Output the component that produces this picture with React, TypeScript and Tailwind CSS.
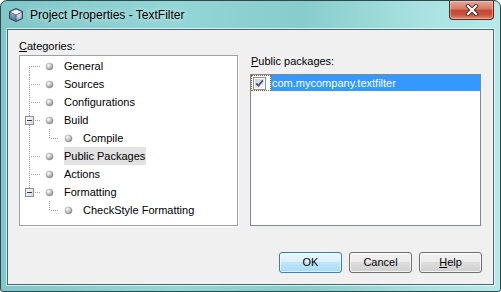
import React from 'react'

type Row = {
  label: string
  level: 1 | 2
  trunkTop?: boolean
  trunkBottom?: boolean
  trunkThrough?: boolean
  expander?: boolean
  selected?: boolean
}

const rows: Row[] = [
  { label: 'General', level: 1, trunkBottom: true },
  { label: 'Sources', level: 1, trunkTop: true, trunkBottom: true },
  { label: 'Configurations', level: 1, trunkTop: true, trunkBottom: true },
  { label: 'Build', level: 1, trunkTop: true, trunkBottom: true, expander: true },
  { label: 'Compile', level: 2, trunkThrough: true },
  { label: 'Public Packages', level: 1, trunkTop: true, trunkBottom: true, selected: true },
  { label: 'Actions', level: 1, trunkTop: true, trunkBottom: true },
  { label: 'Formatting', level: 1, trunkTop: true, expander: true },
  { label: 'CheckStyle Formatting', level: 2 },
]

const dot = { stroke: '#a0a0a0', strokeWidth: 1, strokeDasharray: '1 1' }

function Bullet({ cx }: { cx: number }) {
  return (
    <>
      <defs>
        <radialGradient id="bullet" cx="38%" cy="35%" r="70%">
          <stop offset="0%" stopColor="#ffffff" />
          <stop offset="45%" stopColor="#c9c9c9" />
          <stop offset="100%" stopColor="#7c7c7c" />
        </radialGradient>
      </defs>
      <circle cx={cx} cy={9.5} r={3.6} fill="url(#bullet)" stroke="#9a9a9a" strokeWidth={0.4} />
    </>
  )
}

function Connector({ row }: { row: Row }) {
  if (row.level === 2) {
    return (
      <svg width={63} height={18} className="shrink-0">
        {row.trunkThrough && <line x1={9.5} y1={0} x2={9.5} y2={18} {...dot} />}
        <line x1={29.5} y1={0} x2={29.5} y2={10} {...dot} />
        <line x1={31} y1={9.5} x2={39} y2={9.5} {...dot} />
        <Bullet cx={48.5} />
      </svg>
    )
  }
  const y1 = row.trunkTop ? 0 : 9
  const y2 = row.trunkBottom ? 18 : 10
  return (
    <svg width={44} height={18} className="shrink-0">
      <defs>
        <linearGradient id="expander" x1="0" y1="0" x2="1" y2="1">
          <stop offset="0%" stopColor="#ffffff" />
          <stop offset="100%" stopColor="#d6d6d6" />
        </linearGradient>
      </defs>
      <line x1={9.5} y1={y1} x2={9.5} y2={y2} {...dot} />
      <line x1={row.expander ? 15 : 11} y1={9.5} x2={21} y2={9.5} {...dot} />
      {row.expander && (
        <>
          <rect x={5.5} y={5.5} width={8} height={8} fill="url(#expander)" stroke="#8f8f8f" />
          <line x1={7} y1={9.5} x2={12} y2={9.5} stroke="#22366e" strokeWidth={1} />
        </>
      )}
      <Bullet cx={29.5} />
    </svg>
  )
}

function CubeIcon() {
  return (
    <svg width={16} height={16} viewBox="0 0 16 16">
      <defs>
        <linearGradient id="cubeL" x1="0" y1="0" x2="0" y2="1">
          <stop offset="0%" stopColor="#9fb2c8" />
          <stop offset="100%" stopColor="#5f7491" />
        </linearGradient>
        <linearGradient id="cubeR" x1="0" y1="0" x2="0" y2="1">
          <stop offset="0%" stopColor="#dfe8f2" />
          <stop offset="100%" stopColor="#9db1c9" />
        </linearGradient>
      </defs>
      <path d="M8 1.5 L14.5 4.5 L14.5 11.5 L8 14.5 L1.5 11.5 L1.5 4.5 Z" fill="#4a5a70" stroke="#3a4658" strokeLinejoin="round" />
      <path d="M8 2.4 L13.6 5 L8 7.6 L2.4 5 Z" fill="#f4f7fb" />
      <path d="M2.4 5.8 L7.5 8.3 L7.5 13.5 L2.4 11 Z" fill="url(#cubeL)" />
      <path d="M8.5 8.3 L13.6 5.8 L13.6 11 L8.5 13.5 Z" fill="url(#cubeR)" />
    </svg>
  )
}

function CloseGlyph() {
  return (
    <svg width={14} height={12} viewBox="0 0 14 12">
      <path d="M3 2 L11 10 M11 2 L3 10" stroke="#4a2a26" strokeWidth={4} strokeLinecap="square" />
      <path d="M3 2 L11 10 M11 2 L3 10" stroke="#ffffff" strokeWidth={2.2} strokeLinecap="square" />
    </svg>
  )
}

function CheckBox() {
  return (
    <svg width={13} height={13} viewBox="0 0 13 13">
      <defs>
        <linearGradient id="cbox" x1="0" y1="0" x2="1" y2="1">
          <stop offset="0%" stopColor="#cdd1d6" />
          <stop offset="100%" stopColor="#f7f7f7" />
        </linearGradient>
      </defs>
      <rect x={0.5} y={0.5} width={12} height={12} fill="#ffffff" stroke="#8e8f8f" />
      <rect x={2} y={2} width={9} height={9} fill="url(#cbox)" />
      <path d="M3.2 6.4 L5.4 8.8 L9.8 3.4" fill="none" stroke="#3c4d7a" strokeWidth={1.7} />
    </svg>
  )
}

function Button({ children, primary }: { children: React.ReactNode; primary?: boolean }) {
  return (
    <button
      className={
        primary
          ? 'w-[63px] h-[21px] rounded-[3px] border border-[#3c7fb1] bg-[linear-gradient(#eaf6fd_0%,#d9f0fc_50%,#bee6fd_50%,#a7d9f5_100%)] shadow-[inset_0_0_0_1px_rgba(255,255,255,0.6)] text-[11px] leading-[19px] text-black'
          : 'w-[63px] h-[21px] rounded-[3px] border border-[#707070] bg-[linear-gradient(#f2f2f2_0%,#ebebeb_50%,#dddddd_50%,#cfcfcf_100%)] shadow-[inset_0_0_0_1px_rgba(255,255,255,0.7)] text-[11px] leading-[19px] text-black'
      }
    >
      {children}
    </button>
  )
}

export default function App() {
  return (
    <div className="w-[501px] h-[292px] font-['Liberation_Sans',Arial,sans-serif] text-black">
      <div className="w-full h-full flex flex-col rounded-t-[7px] rounded-b-[3px] border border-[#30474c] bg-[linear-gradient(90deg,#80c7c9_0%,#93d6d6_35%,#86cdcb_60%,#a9e2e2_85%,#b8e9e9_100%)] overflow-hidden">
        {/* title bar */}
        <div className="h-[27px] flex items-start shrink-0">
          <div className="ml-[7px] mt-[6px]">
            <CubeIcon />
          </div>
          <div className="ml-[6px] mt-[6px] text-[12px] leading-[16px] text-black [text-shadow:0_0_6px_rgba(255,255,255,0.9)]">
            Project Properties - TextFilter
          </div>
          <div className="ml-auto mr-[6px] w-[45px] h-[19px] rounded-b-[4px] border border-t-0 border-[#5a2822] bg-[linear-gradient(#e8a595_0%,#d67b69_45%,#c24a35_50%,#c9513b_75%,#e08a6a_100%)] shadow-[inset_0_0_0_1px_rgba(255,220,210,0.45)] flex items-center justify-center">
            <CloseGlyph />
          </div>
        </div>

        {/* client area */}
        <div className="flex-1 mx-[5px] mb-[5px] border border-[rgba(255,255,255,0.65)]">
          <div className="h-full border border-[#48666b] bg-[#f0f0f0] flex flex-col px-[11px] pt-[9px] text-[11px]">
            <div className="flex gap-[11px]">
              <div className="w-[220px] shrink-0">
                <div className="h-[14px] leading-[14px] mb-[2px]">
                  <span className="underline underline-offset-[1px]">C</span>ategories:
                </div>
                <div className="w-[219px] h-[171px] border border-[#a0a0a0] bg-white shadow-[1px_1px_0_#ffffff] pt-[1px]">
                  {rows.map((row) => (
                    <div key={row.label} className="flex h-[18px] items-center">
                      <Connector row={row} />
                      <span className={row.selected ? 'leading-[18px] bg-[#e2e2e2] pr-[1px] whitespace-nowrap' : 'leading-[18px] whitespace-nowrap'}>
                        {row.label}
                      </span>
                    </div>
                  ))}
                </div>
              </div>

              <div className="flex-1 pt-[15px]">
                <div className="h-[14px] leading-[14px] mb-[6px] pl-[1px]">
                  <span className="underline underline-offset-[1px]">P</span>ublic packages:
                </div>
                <div className="w-[231px] h-[152px] border border-[#828790] bg-white">
                  <div className="flex h-[16px]">
                    <div className="w-[20px] h-[16px] border border-dotted border-[#7a5a2a] flex items-start pt-[1px] pl-[1px]">
                      <CheckBox />
                    </div>
                    <div className="flex-1 bg-[#3399ff] text-white leading-[16px] pl-[1px]">
                      com.mycompany.textfilter
                    </div>
                  </div>
                </div>
              </div>
            </div>

            <div className="flex justify-end gap-[7px] mt-[26px]">
              <Button primary>OK</Button>
              <Button>Cancel</Button>
              <Button>
                <span className="underline underline-offset-[1px]">H</span>elp
              </Button>
            </div>
          </div>
        </div>
      </div>
    </div>
  )
}
